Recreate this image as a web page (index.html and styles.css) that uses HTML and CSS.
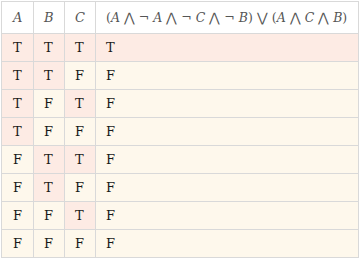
FILE: index.html
```html
<!DOCTYPE html>
<html>
<head>
<meta charset="utf-8">
<link rel="stylesheet" href="styles.css">
</head>
<body>
<table class="truth">
  <thead>
    <tr>
      <th class="var"><i>A</i></th>
      <th class="var"><i>B</i></th>
      <th class="var"><i>C</i></th>
      <th class="expr">(<i>A</i> ⋀ ¬ <i>A</i> ⋀ ¬ <i>C</i> ⋀ ¬ <i>B</i>) ⋁ (<i>A</i> ⋀ <i>C</i> ⋀ <i>B</i>)</th>
    </tr>
  </thead>
  <tbody>
    <tr><td class="t">T</td><td class="t">T</td><td class="t">T</td><td class="t">T</td></tr>
    <tr><td class="t">T</td><td class="t">T</td><td class="f">F</td><td class="f">F</td></tr>
    <tr><td class="t">T</td><td class="f">F</td><td class="t">T</td><td class="f">F</td></tr>
    <tr><td class="t">T</td><td class="f">F</td><td class="f">F</td><td class="f">F</td></tr>
    <tr><td class="f">F</td><td class="t">T</td><td class="t">T</td><td class="f">F</td></tr>
    <tr><td class="f">F</td><td class="t">T</td><td class="f">F</td><td class="f">F</td></tr>
    <tr><td class="f">F</td><td class="f">F</td><td class="t">T</td><td class="f">F</td></tr>
    <tr><td class="f">F</td><td class="f">F</td><td class="f">F</td><td class="f">F</td></tr>
  </tbody>
</table>
</body>
</html>
```

FILE: styles.css
```css
html, body {
  margin: 0;
  padding: 0;
  background: #ffffff;
}
body {
  padding: 1px;
}
.truth {
  border-collapse: collapse;
  width: 358px;
  font-family: "DejaVu Serif", serif;
  font-size: 13px;
  color: #1a1a1a;
}
.truth th, .truth td {
  border: 1px solid #d9d9d9;
  text-align: left;
  padding: 0 0 0 10px;
  font-weight: normal;
}
.truth th {
  height: 31px;
  color: #555;
  background: #fff;
}
.truth .expr {
  font-size: 12.5px;
}
.truth td {
  height: 27px;
}
.truth .var, .truth td:nth-child(-n+3) {
  width: 20px;
}
.truth th:first-child, .truth td:first-child {
  padding-left: 11px;
}
.truth th i {
  font-style: italic;
}
.t { background: #fdebe4; }
.f { background: #fef8ec; }
```
